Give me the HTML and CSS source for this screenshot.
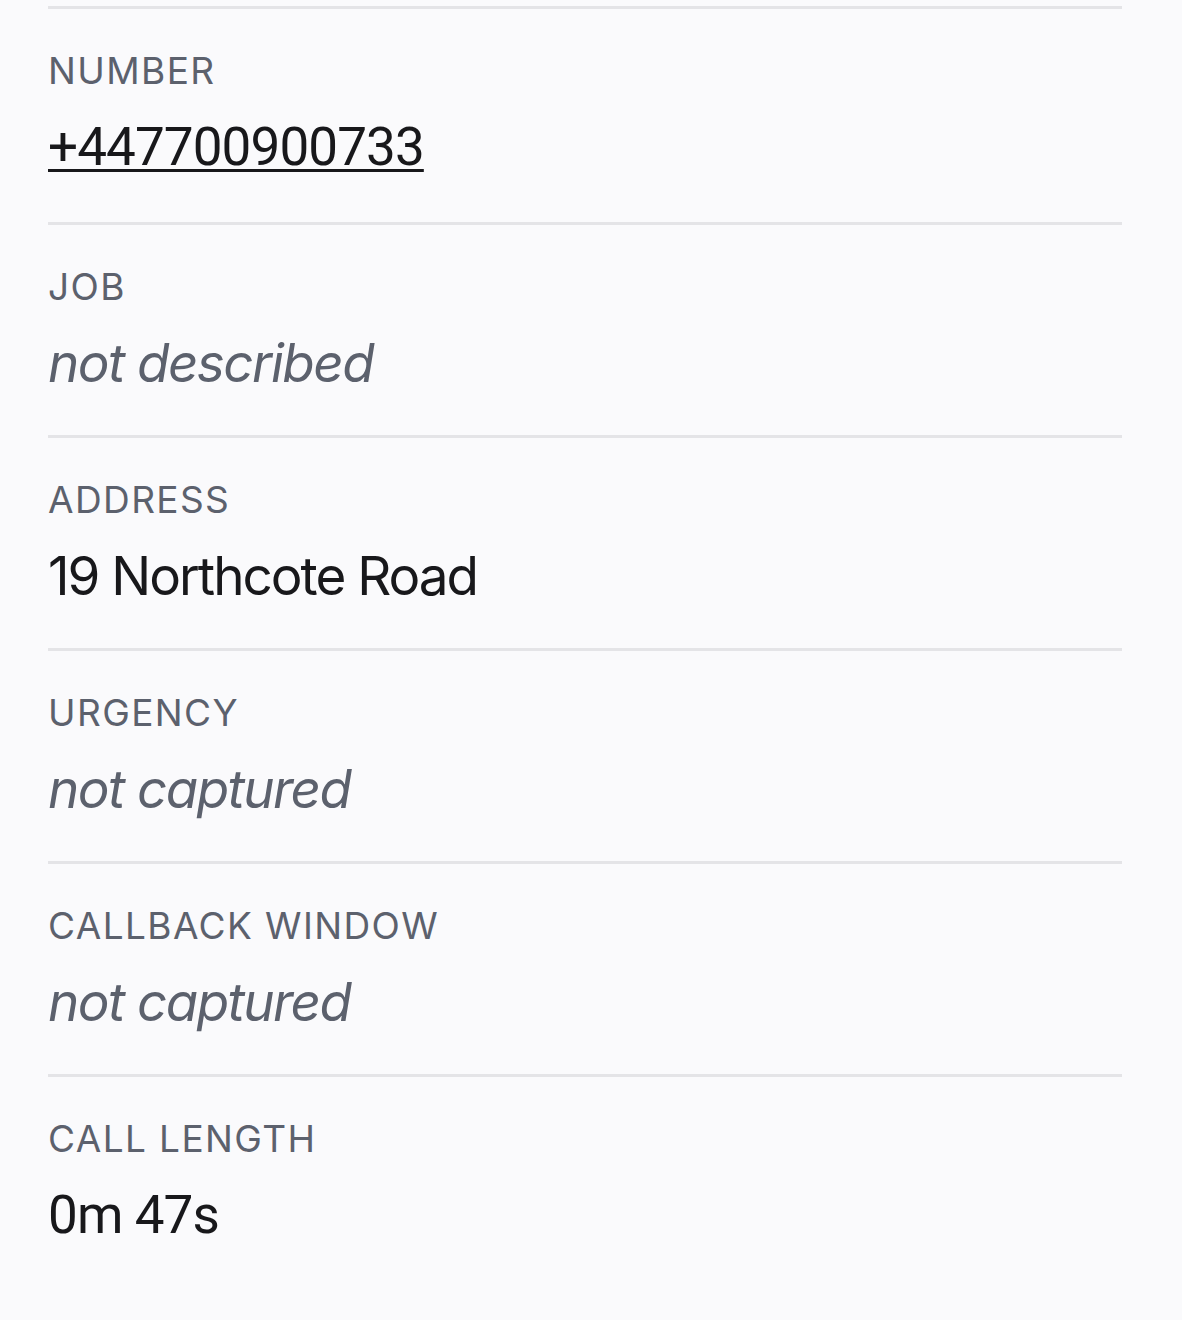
FILE: index.html
```html
<!DOCTYPE html>
<html lang="en">
<head>
    <meta charset="UTF-8">
    <meta name="viewport" content="width=device-width, initial-scale=1.0">
    <title>Call Details</title>
    <link rel="stylesheet" href="styles.css">
</head>
<body>
    <!-- Call detail list -->
    <div class="details">
        <div class="field field-first">
            <div class="field-label">Number</div>
            <div class="field-value numeric"><a class="phone" href="tel:+447700900733">+447700900733</a></div>
        </div>
        <div class="field">
            <div class="field-label">Job</div>
            <div class="field-value empty">not described</div>
        </div>
        <div class="field">
            <div class="field-label">Address</div>
            <div class="field-value">19 Northcote Road</div>
        </div>
        <div class="field">
            <div class="field-label">Urgency</div>
            <div class="field-value empty">not captured</div>
        </div>
        <div class="field">
            <div class="field-label">Callback window</div>
            <div class="field-value empty">not captured</div>
        </div>
        <div class="field">
            <div class="field-label">Call length</div>
            <div class="field-value numeric">0m 47s</div>
        </div>
    </div>
</body>
</html>
```

FILE: styles.css
```css
/* General Styles */
body {
    margin: 0;
    padding: 6px 60px 0 48px;
    font-family: Inter, "Noto Sans", Arial, sans-serif;
    background-color: #fafafc;
    color: #18181b;
}

/* Detail rows */
.details {
    display: flex;
    flex-direction: column;
}

.field {
    border-top: 3px solid #e4e4e7;
    padding: 40px 0 40px 0;
}

.field-first {
    padding-bottom: 43px;
}

.field-label {
    font-size: 37px;
    line-height: 44px;
    text-transform: uppercase;
    letter-spacing: 1.4px;
    color: #5c616d;
}

.field-value {
    margin-top: 22px;
    font-size: 53px;
    line-height: 64px;
    letter-spacing: -2px;
    color: #18181b;
}

/* narrower digits for phone numbers and durations */
.field-value.numeric {
    font-family: Roboto, Inter, Arial, sans-serif;
    letter-spacing: -0.9px;
}

.field-value.empty {
    font-style: italic;
    letter-spacing: -1.6px;
    color: #5c616d;
}

.phone {
    color: #18181b;
    text-decoration: underline;
    text-decoration-thickness: 3px;
    text-underline-offset: 4px;
}
```
